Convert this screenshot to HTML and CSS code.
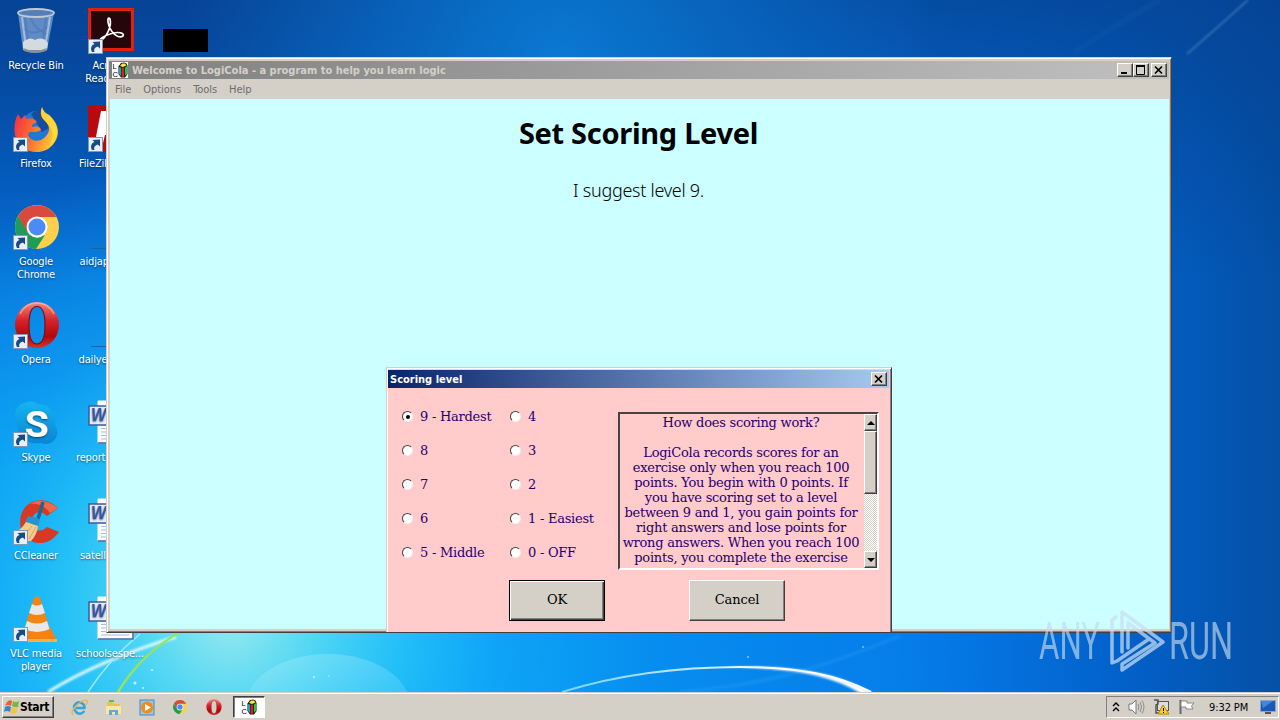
FILE: index.html
```html
<!DOCTYPE html>
<html lang="en">
<head>
<meta charset="utf-8">
<title>Welcome to LogiCola</title>
<link rel="stylesheet" href="styles.css">
</head>
<body>
<svg class="defs" width="0" height="0" aria-hidden="true">
  <symbol id="shortcut" viewBox="0 0 15 15">
    <rect x=".5" y=".5" width="14" height="14" fill="#e9eff8" stroke="#8298b5"/>
    <path d="M4 13C2 9 3.500 6 6.500 5L4.500 3L12 2.500V9.500L9.800 7.500C7 8.500 5.500 10 6.500 13Z" fill="#194a87"/>
  </symbol>
  <symbol id="chrome" viewBox="0 0 44 44">
    <circle cx="22" cy="22" r="22" fill="#fdd04b"/>
    <path d="M22 22L11.500 28L3 11A22 22 0 0 1 41.500 12H22Z" fill="#d94a3d"/>
    <path d="M3 11L13 28L22 33L30 30L21 44A22 22 0 0 1 3 11Z" fill="#1f9d57"/>
    <circle cx="22" cy="22" r="10.500" fill="#fff"/>
    <circle cx="22" cy="22" r="8.500" fill="#4c8bf5"/>
  </symbol>
  <symbol id="opera" viewBox="0 0 44 46">
    <path fill-rule="evenodd" d="M0 23A22 23 0 1 1 44 23A22 23 0 1 1 0 23ZM22 4.500C28 4.500 30 12 30 23S28 42 22 42S14 34 14 23S16 4.500 22 4.500Z" fill="url(#redGlass)"/>
    <path d="M22 4.500C28 4.500 30 12 30 23S28 42 22 42S14 34 14 23S16 4.500 22 4.500Z" fill="none" stroke="#7c1015" stroke-width="1.200"/>
    <path d="M5 12C9 4 15 1 22 1S35 4 39 12" fill="none" stroke="#ffc6be" stroke-width="1.500" opacity=".6"/>
  </symbol>
  <symbol id="worddoc" viewBox="0 0 46 44">
    <path d="M10 1H45V43H10Z" fill="#f9fbff" stroke="#fff"/>
    <path d="M45 3V43H10" fill="none" stroke="#4663a2" stroke-width="1.500"/>
    <path d="M13 25H41M13 28.500H41M13 32H41M13 35.500H41M13 39H41" stroke="#a9bbde"/>
    <rect x="1" y="6" width="19" height="19" fill="#e6eefb" stroke="#3b5ba6" stroke-width="1.500"/>
    <text x="3" y="21" class="word-letter" textLength="15" lengthAdjust="spacingAndGlyphs">W</text>
  </symbol>
  <symbol id="logicola" viewBox="0 0 16 16" overflow="visible">
    <rect width="16" height="16" fill="#fff"/>
    <text x=".500" y="6.500" class="lc-letter">L</text>
    <text x=".500" y="14.500" class="lc-letter">C</text>
    <path d="M6.500 4.500L9 1L12 .5L14.500 1.500L15.500 4V12L13 15.500H9L6.500 12Z" fill="#111"/>
    <path d="M8 4L10 1.500H13L14.500 3.500L11 5Z" fill="#f6ed29"/>
    <path d="M7.200 5L8.800 5.500V14L7.200 12Z" fill="#19cfe0"/>
    <path d="M9.500 5.500H12V14.800H9.500Z" fill="#e31c24"/>
    <path d="M12.800 5.500L15 4V12L12.800 14Z" fill="#1eca36"/>
  </symbol>
  <linearGradient id="redGlass" x2="0" y2="1"><stop stop-color="#f3877e"/><stop offset=".4" stop-color="#d5232a"/><stop offset=".75" stop-color="#b4060c"/><stop offset="1" stop-color="#d9342f"/></linearGradient>
</svg>

<main class="desktop">
  <svg class="wallpaper" viewBox="0 0 1280 692" preserveAspectRatio="none" aria-hidden="true">
    <defs>
      <linearGradient id="sky" x2="0" y2="1"><stop stop-color="#0a4dab"/><stop offset=".26" stop-color="#0465cc"/><stop offset=".48" stop-color="#0680e4"/><stop offset=".68" stop-color="#069cf2"/><stop offset="1" stop-color="#08a2fa"/></linearGradient>
      <linearGradient id="east"><stop offset=".35" stop-color="#0568d8" stop-opacity="0"/><stop offset=".7" stop-color="#0578e8" stop-opacity=".85"/><stop offset=".87" stop-color="#0362cc"/><stop offset="1" stop-color="#0450a6"/></linearGradient>
      <linearGradient id="north" x2="0" y2="1"><stop stop-color="#05408f" stop-opacity=".75"/><stop offset="1" stop-color="#05408f" stop-opacity="0"/></linearGradient>
      <radialGradient id="glow" gradientUnits="userSpaceOnUse" cx="230" cy="610" r="420" gradientTransform="translate(0 -60) scale(1 1.100)"><stop stop-color="#9cebee"/><stop offset=".22" stop-color="#52d8f4" stop-opacity=".95"/><stop offset=".42" stop-color="#28c6f7" stop-opacity=".8"/><stop offset=".65" stop-color="#18b0f7" stop-opacity=".4"/><stop offset="1" stop-color="#12a8f5" stop-opacity="0"/></radialGradient>
      <radialGradient id="topglow" gradientUnits="userSpaceOnUse" cx="560" cy="60" r="380"><stop stop-color="#0a78d2"/><stop offset="1" stop-color="#0a78d2" stop-opacity="0"/></radialGradient>
      <linearGradient id="orb" x2="0" y2="1"><stop stop-color="#c9f6ff" stop-opacity=".25"/><stop offset="1" stop-color="#b9f0ff" stop-opacity="0"/></linearGradient>
      <linearGradient id="arc"><stop stop-color="#7dd2ff"/><stop offset=".5" stop-color="#c9ecff"/><stop offset=".7" stop-color="#fff"/></linearGradient>
      <filter id="soft"><feGaussianBlur stdDeviation="1"/></filter>
    </defs>
    <rect width="1280" height="692" fill="url(#sky)"/>
    <rect width="1280" height="692" fill="url(#east)"/>
    <rect width="1280" height="280" fill="url(#north)"/>
    <rect width="1280" height="692" fill="url(#topglow)"/>
    <rect width="1280" height="692" fill="url(#glow)"/>
    <ellipse cx="328" cy="706" rx="82" ry="52" fill="url(#orb)"/>
    <path d="M562 692C620 674 680 667 740 667C800 667 838 675 871 692" fill="none" stroke="url(#arc)" stroke-width="2"/>
    <path d="M725 667C800 665 840 674 874 694L862 694C830 674 790 668 725 667Z" fill="#fff" filter="url(#soft)"/>
    <path d="M680 692C780 684 840 660 900 636" fill="none" stroke="#5bbcff" stroke-width="4" opacity=".15" filter="url(#soft)"/>
    <path d="M48 692C85 669 130 651 176 637" fill="none" stroke="#d7f7ff" stroke-width="3" filter="url(#soft)"/>
    <path d="M88 692C101 672 118 652 140 634" fill="none" stroke="#9cebfa" stroke-width="1.500"/>
    <path d="M118 692C133 667 152 648 180 632" fill="none" stroke="#94e45e" stroke-width="2.500"/>
    <path d="M1187 54Q1218 27 1248 0" fill="none" stroke="#3f7fbd" stroke-width="2" opacity=".7" filter="url(#soft)"/>
    <path d="M1075 52Q1120 22 1160 0" fill="none" stroke="#1b63ac" stroke-width="6" opacity=".2" filter="url(#soft)"/>
    <g fill="#c8f4ff"><circle cx="135" cy="683" r="1.500"/><circle cx="143" cy="688" r="1"/><circle cx="152" cy="670" r="1"/><circle cx="314" cy="677" r="1"/><circle cx="329" cy="676" r=".7"/><circle cx="748" cy="657" r=".8"/><circle cx="863" cy="647" r=".8"/></g>
  </svg>

  <div class="icon recycle">
    <svg width="46" height="48" viewBox="0 0 46 48"><path d="M5 5L10 42Q22 48 34 42L41 5Z" fill="#7fa3d0" opacity=".75"/><path d="M12 10L16 40M33 10L29 40M10 20Q20 30 36 18M17 9Q22 22 34 26" fill="none" stroke="#3d70b5" stroke-width="2" opacity=".45"/><path d="M9 9L13 40M37 9L32 40" stroke="#cfdcec" stroke-width="2" opacity=".6"/><path d="M10 34Q17 28 22 32Q30 28 35 35L34 42H10Z" fill="#d4dae2"/><path d="M10 40Q22 45 34 40L33 43Q22 47 11 43Z" fill="#8c9096"/><ellipse cx="23" cy="5" rx="18" ry="4" fill="#547eb4" stroke="#bdc9d5" stroke-width="1.800"/></svg>
    <span>Recycle Bin</span>
  </div>
  <div class="icon firefox">
    <svg width="46" height="48" viewBox="0 0 46 48"><defs><linearGradient id="fire" x1="0" x2="1" y2=".3"><stop stop-color="#f0284c"/><stop offset=".5" stop-color="#ff6a2c"/><stop offset="1" stop-color="#ffc536"/></linearGradient></defs><circle cx="24" cy="21" r="16" fill="#2078d5"/><path d="M18 8Q25 1 34 8Q38 14 36 22L29 26Z" fill="#154d9f"/><path d="M5 8L8 13L12 9L13 13Q18 11 22 14L24 16Q18 18 19 21Q27 19 28 24Q25 26 21 26Q15 25 15 29C18 36 28 37 33 30C39 24 35 17 30 13Q26 9 29 1Q30 6 36 9C49 20 47 35 35 43C23 50 5 45 2 29Q0 17 5 8Z" fill="url(#fire)"/><path d="M29 1Q30 6 36 9C47 20 46 32 37 39Q44 26 32 15Q26 10 29 1Z" fill="#ffe43a" opacity=".8"/></svg>
    <svg class="link" width="15" height="15"><use href="#shortcut"/></svg>
    <span>Firefox</span>
  </div>
  <div class="icon google">
    <svg width="44" height="44"><use href="#chrome"/></svg>
    <svg class="link" width="15" height="15"><use href="#shortcut"/></svg>
    <span>Google<br>Chrome</span>
  </div>
  <div class="icon opera">
    <svg width="44" height="46"><use href="#opera"/></svg>
    <svg class="link" width="15" height="15"><use href="#shortcut"/></svg>
    <span>Opera</span>
  </div>
  <div class="icon skype">
    <svg width="46" height="46" viewBox="0 0 46 46"><defs><linearGradient id="sk" x2="0" y2="1"><stop stop-color="#16b4f2"/><stop offset="1" stop-color="#0785d3"/></linearGradient></defs><path d="M14 1C19 0 22 1 25 3C37 3 44 13 42 24C49 35 39 46 28 42C15 44 4 37 4 23C-1 13 3 3 14 1Z" fill="url(#sk)"/><text x="11.500" y="35.500" class="skype-letter" textLength="24" lengthAdjust="spacingAndGlyphs">S</text></svg>
    <svg class="link" width="15" height="15"><use href="#shortcut"/></svg>
    <span>Skype</span>
  </div>
  <div class="icon ccleaner">
    <svg width="48" height="48" viewBox="0 0 48 48"><path d="M46 9C33-4 14 0 9 16C5 32 15 45 30 44Q40 43 47 33L35 28C28 35 20 31 20 22C20 13 29 10 35 17Z" fill="#d83925"/><path d="M46 9Q30-3 18 5Q30 3 38 14Z" fill="#f06a49"/><path d="M31 3L26 20" stroke="#17689b" stroke-width="3.500"/><path d="M16 17L28 20L26 28L13 24Z" fill="#2a92cb"/><path d="M14 23L26 27Q25 36 19 42Q10 43 1 35Q9 31 14 23Z" fill="#f2cc8b"/><path d="M20 27Q14 35 10 38M24 28L17 40" fill="none" stroke="#dba763"/></svg>
    <svg class="link" width="15" height="15"><use href="#shortcut"/></svg>
    <span>CCleaner</span>
  </div>
  <div class="icon vlc">
    <svg width="44" height="46" viewBox="0 0 44 46"><path d="M9 31H36L43 45H3Z" fill="#f48110"/><path d="M3 43H43V46H3Z" fill="#ffb040"/><path d="M20 2Q23-1 26 2L36 34Q23 42 10 34Z" fill="#f78310"/><path d="M18 8Q23 11 28 8L31 17Q23 21 15 17ZM13 25Q23 30 33 25L35.500 33Q23 39 10.500 33Z" fill="#e8e8e8"/></svg>
    <svg class="link" width="15" height="15"><use href="#shortcut"/></svg>
    <span>VLC media<br>player</span>
  </div>
  <div class="icon acrobat">
    <svg width="46" height="44" viewBox="0 0 46 44"><rect x="1.500" y="1.500" width="43" height="40" fill="#25060a" stroke="#e1200f" stroke-width="3"/><path d="M12 33C18 30 24 19 22 11C20 8 19 12 21 18C24 26 31 31 35 28C37 25 30 23 22 26C16 28 11 31 12 33Z" fill="none" stroke="#fff" stroke-width="1.700"/></svg>
    <svg class="link" width="15" height="15"><use href="#shortcut"/></svg>
    <span>Acrobat<br>Reader DC</span>
  </div>
  <div class="icon filezilla">
    <svg width="46" height="48" viewBox="0 0 46 48"><rect width="46" height="46" fill="#b80a0e"/><path d="M13 5H38L36 13H21L19 21H32L30 29H17L14 41H6Z" fill="#fff"/></svg>
    <svg class="link" width="15" height="15"><use href="#shortcut"/></svg>
    <span>FileZilla Client</span>
  </div>
  <div class="file aid"><i></i><span>aidjap</span></div>
  <div class="file daily"><i></i><span>dailye</span></div>
  <div class="file report"><svg width="46" height="44"><use href="#worddoc"/></svg><span>report</span></div>
  <div class="file satell"><svg width="46" height="44"><use href="#worddoc"/></svg><span>satelli</span></div>
  <div class="file school"><svg width="46" height="44"><use href="#worddoc"/></svg><span>schoolsespe...</span></div>
  <div class="blackbox"></div>

  <section class="window">
    <header class="titlebar">
      <svg width="16" height="16"><use href="#logicola"/></svg>
      <h1>Welcome to LogiCola - a program to help you learn logic</h1>
      <div class="controls">
        <button aria-label="Minimize"><svg width="12" height="10"><path d="M2 8H8" stroke="#000" stroke-width="2"/></svg></button>
        <button aria-label="Maximize"><svg width="12" height="10"><path d="M1.500 1V9.500H9.500V1" fill="none" stroke="#000"/><path d="M1 1H10" stroke="#000" stroke-width="2"/></svg></button>
        <button class="close" aria-label="Close"><svg width="12" height="10"><path d="M2 1.500L9 8.500M9 1.500L2 8.500" stroke="#000" stroke-width="1.700"/></svg></button>
      </div>
    </header>
    <nav class="menu"><span>File</span><span>Options</span><span>Tools</span><span>Help</span></nav>
    <div class="client">
      <h2>Set Scoring Level</h2>
      <p>I suggest level 9.</p>
    </div>

    <section class="dialog">
      <header class="dialog-title"><h3>Scoring level</h3><button aria-label="Close"><svg width="12" height="10"><path d="M2 1.500L9 8.500M9 1.500L2 8.500" stroke="#000" stroke-width="1.700"/></svg></button></header>
      <div class="dialog-body">
        <div class="top">
          <div class="levels">
            <label><i class="radio on"></i>9 - Hardest</label><label><i class="radio"></i>4</label>
            <label><i class="radio"></i>8</label><label><i class="radio"></i>3</label>
            <label><i class="radio"></i>7</label><label><i class="radio"></i>2</label>
            <label><i class="radio"></i>6</label><label><i class="radio"></i>1 - Easiest</label>
            <label><i class="radio"></i>5 - Middle</label><label><i class="radio"></i>0 - OFF</label>
          </div>
          <div class="help">
            <div class="help-text">How does scoring work?<br><br>LogiCola records scores for an<br>exercise only when you reach 100<br>points. You begin with 0 points. If<br>you have scoring set to a level<br>between 9 and 1, you gain points for<br>right answers and lose points for<br>wrong answers. When you reach 100<br>points, you complete the exercise</div>
            <div class="scrollbar"><b><svg width="8" height="4"><path d="M0 4L4 0L8 4Z"/></svg></b><b class="thumb"></b><b class="down"><svg width="8" height="4"><path d="M0 0L4 4L8 0Z"/></svg></b></div>
          </div>
        </div>
        <div class="actions"><button class="ok">OK</button><button>Cancel</button></div>
      </div>
    </section>
  </section>

  <svg class="watermark" width="200" height="70" viewBox="0 0 200 70">
    <g class="wm-text"><text x="3" y="50" textLength="61" lengthAdjust="spacingAndGlyphs">ANY</text><text x="133" y="50" textLength="64" lengthAdjust="spacingAndGlyphs">RUN</text></g>
    <g fill="none" stroke="#c9dff3" stroke-width="3.500" stroke-linejoin="round" stroke-linecap="round" opacity=".72"><path d="M86 43V3L127 33L86 61V55L119 34L92 14V39"/><path d="M80 8L76 11V54L81 52L113 30"/></g>
  </svg>
</main>

<footer class="taskbar">
  <div class="start"><svg width="16" height="16" viewBox="0 0 16 16"><path d="M3 3Q6 0 8 2L7 7Q4 5 1 7Z" fill="#e86031"/><path d="M9 2Q12 4 15 2L14 8Q11 9 8 7Z" fill="#75b843"/><path d="M1 8Q4 6 7 8L6 13Q3 11 0 13Z" fill="#3c82cf"/><path d="M8 8Q11 10 14 9L12 14Q9 16 6 14Z" fill="#f5c63c"/></svg><span>Start</span></div>
  <div class="quick">
    <svg width="17" height="17" viewBox="0 0 17 17"><path d="M13.500 12Q9 17 5 13Q1 8 5 4.500Q9 2 12 5Q14 7 13.500 9H5" fill="none" stroke="#32a5df" stroke-width="2.500"/><path d="M2 16Q-1 13 5 7Q13-1 16 2Q17 3 15 6" fill="none" stroke="#e8b43c" stroke-width="1.300"/></svg>
    <svg width="17" height="17" viewBox="0 0 17 17"><path d="M2 3H7L9 5H15V14H2Z" fill="#e4c35a"/><path d="M1 7H16V15H1Z" fill="#f7e7a1"/><path d="M4 16V11H13V16H10V13H7V16Z" fill="#56aedd"/><path d="M4 2H9" stroke="#62b75f" stroke-width="2"/></svg>
    <svg width="17" height="17" viewBox="0 0 17 17"><rect x="1" y="1" width="14" height="15" fill="#9bc5e8" stroke="#4389c2"/><circle cx="8" cy="8.500" r="6" fill="#f58a17"/><path d="M6 5L12 8.500L6 12Z" fill="#fff"/></svg>
    <svg class="q-chrome" width="14" height="14"><use href="#chrome"/></svg>
    <svg class="q-opera" width="16" height="16"><use href="#opera"/></svg>
  </div>
  <div class="task"><svg width="16" height="16"><use href="#logicola"/></svg></div>
  <div class="tray">
    <svg width="8" height="10" viewBox="0 0 8 10"><path d="M1 4L4 1L7 4M1 9L4 6L7 9" fill="none" stroke="#000" stroke-width="1.400"/></svg>
    <svg width="17" height="16" viewBox="0 0 17 16"><path d="M1 5H4L8 1V15L4 11H1Z" fill="#fff" stroke="#777"/><path d="M10 5Q12 8 10 11M12 3Q15 8 12 13M14 1.500Q18 8 14 14.500" fill="none" stroke="#8b8b8b"/></svg>
    <svg width="17" height="16" viewBox="0 0 17 16"><rect x="4.500" y="2.500" width="11" height="9" fill="#ddd" stroke="#555"/><path d="M1 1H5V5L3 6V14H8" fill="none" stroke="#555" stroke-width="1.500"/><path d="M10 6L16 15H5Z" fill="#f7cd24" stroke="#b28b00"/><path d="M10.500 9V12M10.500 13V14" stroke="#000"/></svg>
    <svg width="17" height="16" viewBox="0 0 17 16"><path d="M2.500 15V1" stroke="#666" stroke-width="2"/><path d="M3 2H9V4H16L13.500 7L15 10H8V8H3Z" fill="#fff" stroke="#888"/></svg>
    <time>9:32 PM</time>
    <svg class="monitor" width="16" height="14" viewBox="0 0 16 14"><rect x=".5" y=".5" width="15" height="11" fill="#1a59b5" stroke="#88a7cc"/><path d="M1 1H13L3 8Z" fill="#4387d8"/><path d="M5 13H11" stroke="#555" stroke-width="2"/></svg>
  </div>
</footer>
</body>
</html>
```
FILE: styles.css
```css
* { box-sizing: border-box; }
body { margin: 0; width: 1280px; height: 720px; overflow: hidden; display: flex; flex-direction: column; font: 11px "DejaVu Sans Condensed", "DejaVu Sans", sans-serif; font-stretch: condensed; }
h1, h2, h3, p { margin: 0; }
svg { display: block; flex: none; }
.defs { position: absolute; }
.desktop { position: relative; height: 692px; flex: none; }
.wallpaper { position: absolute; width: 1280px; height: 692px; }

/* desktop icons */
.icon, .file { position: absolute; width: 80px; display: flex; flex-direction: column; align-items: center; color: #fff; font-size: 11px; line-height: 13px; letter-spacing: -.15px; text-align: center; text-shadow: 0 1px 2px #0008; }
.icon { left: -4px; }
.icon > span { margin-top: auto; }
.icon .link { position: absolute; left: 17px; top: 31px; }
.recycle { top: 8px; height: 64px; }
.firefox { top: 106px; height: 64px; }
.google { top: 205px; height: 76px; }
.google > svg:first-child, .opera > svg:first-child { margin-left: 1px; }
.opera { top: 302px; height: 64px; }
.skype { top: 401px; height: 63px; }
.ccleaner { top: 499px; height: 63px; }
.vlc { top: 596px; height: 77px; }
.google .link { top: 30px; }
.opera .link { top: 32px; }
.acrobat { left: 71px; top: 8px; height: 77px; }
.filezilla { left: 71px; top: 106px; height: 64px; }
.filezilla span { width: 64px; white-space: nowrap; text-align: left; }
.file { left: 71px; }
.file span { width: 70px; text-align: left; white-space: nowrap; }
.file i { width: 40px; height: 1px; background: #17679d; }
.aid { top: 248px; }
.daily { top: 346px; }
.aid span { margin: 6px 0 0 7px; }
.daily span { margin: 6px 0 0 5px; }
.report { top: 400px; }
.satell { top: 498px; }
.school { top: 596px; }
.report span, .satell span, .school span { margin-top: 7px; }
.satell span { padding-left: 4px; }
.blackbox { position: absolute; left: 163px; top: 29px; width: 45px; height: 23px; background: #000; }
.word-letter { font: italic bold 18px "Liberation Sans", sans-serif; fill: #3456a7; }
.lc-letter { font: 7.500px "Liberation Sans", sans-serif; fill: #000; }
.skype-letter { font: bold 36px Roboto, sans-serif; fill: #fff; }

/* main window */
.window { position: absolute; left: 106px; top: 57px; width: 1066px; height: 576px; padding: 2px 1px 1px 2px; display: flex; flex-direction: column; overflow: hidden; background: #d4d0c8; border: 1px solid; border-color: #d4d0c8 #404040 #404040 #d4d0c8; box-shadow: inset 1px 1px #fff, inset -1px -1px #808080; }
.titlebar { display: flex; align-items: center; height: 18px; margin: 1px 1px 0 0; padding: 0 2px 0 3px; background: linear-gradient(90deg, #808080, #c0c0c0); }
.titlebar h1 { flex: 1; margin-left: 4px; font-size: 11px; color: #d4d0c8; letter-spacing: 0; white-space: nowrap; }
.controls { display: flex; }
button { margin: 0; padding: 0; border: 1px solid; border-color: #fff #404040 #404040 #fff; background: #d4d0c8; box-shadow: inset -1px -1px #808080; }
.controls button, .dialog-title button { width: 16px; height: 14px; display: flex; align-items: center; justify-content: center; }
.controls .close { margin-left: 2px; }
.menu { display: flex; height: 20px; align-items: center; color: #6d6d6d; padding-left: 6px; gap: 12px; letter-spacing: -.05px; }
.client { flex: 1; margin: 0 1px 2px 1px; background: #cff; display: flex; flex-direction: column; align-items: center; color: #000; }
.client h2 { margin: 14px 2px 0 0; font: bold 29px/40px "Noto Sans", sans-serif; font-stretch: normal; letter-spacing: -.3px; white-space: nowrap; }
.client p { margin: 25px 2px 0 0; font: 300 18px/24px "Noto Sans", sans-serif; font-stretch: normal; letter-spacing: -.28px; white-space: nowrap; }

/* scoring dialog */
.dialog { position: absolute; left: 279px; top: 309px; width: 506px; height: 270px; border: 1px solid; border-color: #d4d0c8 #404040 #404040 #d4d0c8; padding: 2px 2px 1px 1px; background: #ffcbcb; box-shadow: inset 1px 1px #fff, inset -1px -1px #808080; font-family: "DejaVu Serif", serif; font-stretch: normal; }
.dialog-title { height: 18px; padding: 0 2px 0 2px; display: flex; align-items: center; justify-content: space-between; background: linear-gradient(90deg, #0a246a, #a6caf0); color: #fff; }
.dialog-title h3 { font: bold 11px "DejaVu Sans Condensed", sans-serif; letter-spacing: 0; }
.dialog-body { padding: 24px 9px 0 14px; }
.top { display: flex; justify-content: space-between; height: 158px; }
.levels { display: grid; grid-template-columns: 108px 108px; grid-auto-rows: 33.8px; margin-top: -12px; }
.levels label { display: flex; align-items: center; gap: 7px; font-size: 13px; color: #1f0071; white-space: nowrap; letter-spacing: -.25px; }
.radio { width: 11px; height: 11px; border-radius: 50%; background: #fff; border: 1px solid; border-color: #404040 #eee #eee #404040; display: grid; place-items: center; }
.radio.on::after { content: ""; width: 4px; height: 4px; border-radius: 50%; background: #000; }
.help { width: 264px; height: 158px; margin-right: 1px; border: 2px solid; border-color: #494141 #fff #fff #494141; display: flex; overflow: hidden; }
.help-text { width: 244px; flex: none; padding: 1px 2px 0 0; font-size: 13px; line-height: 15px; letter-spacing: -.24px; text-align: center; color: #1f0071; white-space: nowrap; }
.scrollbar { width: 16px; display: flex; flex-direction: column; background: repeating-conic-gradient(#fff 0 25%, #d4d0c8 0 50%) 0 0 / 2px 2px; }
.scrollbar b { height: 17px; display: grid; place-items: center; background: #d4d0c8; border: 1px solid; border-color: #fff #404040 #404040 #fff; box-shadow: inset -1px -1px #808080; }
.scrollbar .thumb { height: 63px; }
.scrollbar .down { margin-top: auto; }
.actions { display: flex; gap: 84px; margin: 10px 0 0 107px; }
.actions button { width: 96px; height: 41px; padding-bottom: 2px; font: 13px "DejaVu Serif", serif; color: #000; letter-spacing: -.1px; }
.actions .ok { border-color: #000; box-shadow: inset 1px 1px #fff, inset -1px -1px #404040, inset -2px -2px #808080; }

.watermark { position: absolute; left: 1036px; top: 609px; }
.wm-text { font: 400 52px Roboto, sans-serif; font-stretch: normal; fill: #c5daf0; opacity: .65; }

/* taskbar */
.taskbar { height: 28px; display: flex; align-items: center; background: #d4d0c8; border-top: 1px solid #d4d0c8; box-shadow: inset 0 1px #fff; padding: 1px 1px 0 2px; }
.start { width: 52px; height: 22px; display: flex; align-items: center; padding-left: 1px; border: 1px solid; border-color: #fff #404040 #404040 #fff; box-shadow: inset -1px -1px #808080; font-weight: bold; font-size: 12px; letter-spacing: -.3px; }
.quick { display: flex; align-items: center; gap: 17px; margin-left: 17px; width: 162px; }
.q-opera { margin-left: 2px; }
.task { width: 32px; height: 22px; display: grid; place-items: center; background: #fff; border: 1px solid; border-color: #404040 #fff #fff #404040; box-shadow: inset 1px 1px #808080; }
.tray { margin-left: auto; width: 173px; height: 22px; display: flex; align-items: center; gap: 8px; padding-left: 5px; border: 1px solid; border-color: #808080 #fff #fff #808080; }
.tray time { margin-left: 6px; letter-spacing: -.1px; white-space: nowrap; }
.monitor { margin-left: 4px; }
```
